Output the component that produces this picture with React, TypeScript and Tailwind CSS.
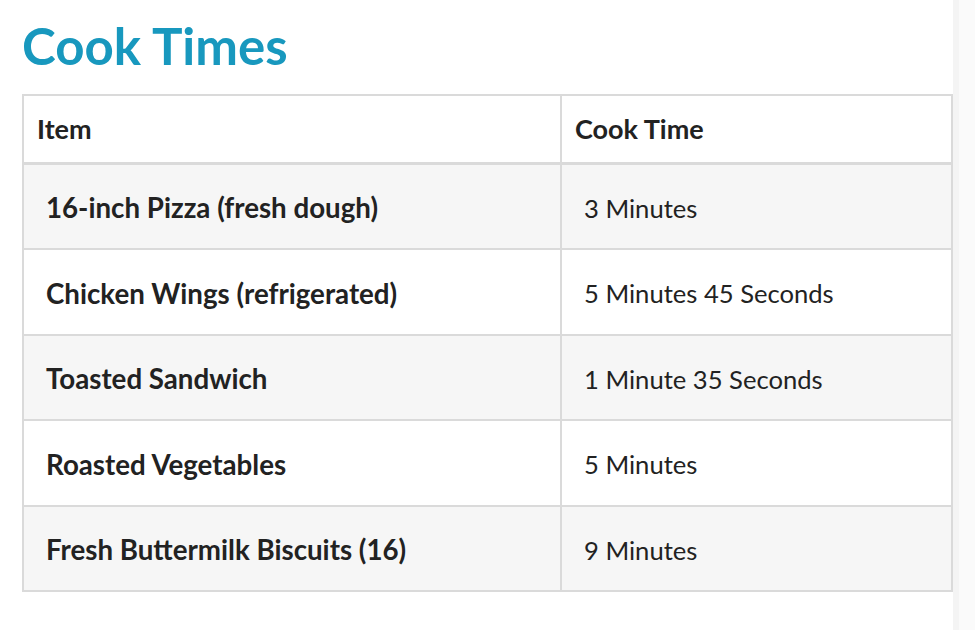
const rows = [
  { item: "16-inch Pizza (fresh dough)", time: "3 Minutes", h: "h-[85px]" },
  { item: "Chicken Wings (refrigerated)", time: "5 Minutes 45 Seconds", h: "h-[86px]" },
  { item: "Toasted Sandwich", time: "1 Minute 35 Seconds", h: "h-[85px]" },
  { item: "Roasted Vegetables", time: "5 Minutes", h: "h-[86px]" },
  { item: "Fresh Buttermilk Biscuits (16)", time: "9 Minutes", h: "h-[83px]" },
];

export default function App() {
  return (
    <div className="flex h-[630px] w-[975px] bg-white font-['Lato','Liberation_Sans',sans-serif] text-[#222]">
      <main className="w-[953px] pl-[22px]">
        <h1 className="mt-[14px] text-[51px] leading-[64px] font-bold text-[#1898be]">Cook Times</h1>
        <div className="mt-[16px] w-[931px] border-2 border-[#dadada]">
          <div className="flex h-[69px] border-b-[3px] border-[#dadada] text-[27px] font-bold">
            <div className="flex w-[538px] items-center border-r-2 border-[#dadada] pl-[13px]">Item</div>
            <div className="flex flex-1 items-center pl-[13px]">Cook Time</div>
          </div>
          {rows.map((r, i) => (
            <div
              key={r.item}
              className={`flex ${r.h} ${i % 2 === 0 ? "bg-[#f6f6f6]" : "bg-white"} ${
                i < rows.length - 1 ? "border-b-2 border-[#dadada]" : ""
              }`}
            >
              <div className="flex w-[538px] items-center border-r-2 border-[#dadada] pt-[3px] pl-[22px] text-[27.7px] font-bold">
                {r.item}
              </div>
              <div className="flex flex-1 items-center pt-[3px] pl-[22px] text-[25.6px]">{r.time}</div>
            </div>
          ))}
        </div>
      </main>
      <aside className="flex flex-1">
        <div className="w-[6px] bg-[#f4f4f4]" />
        <div className="flex-1 bg-[#fafafa]" />
      </aside>
    </div>
  );
}
